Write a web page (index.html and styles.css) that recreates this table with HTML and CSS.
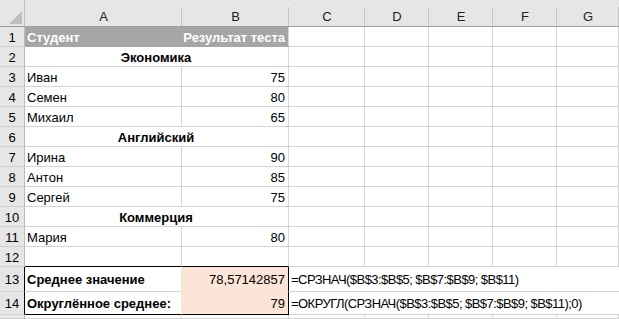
FILE: index.html
```html
<!DOCTYPE html>
<html>
<head>
  <meta charset="UTF-8">
  <title>Средний результат</title>
  <link rel="stylesheet" href="styles.css">
</head>
<body>
  <div class="sheet">
    <!-- заголовки столбцов -->
    <div class="corner">
      <svg width="24" height="26" viewBox="0 0 24 26"><polygon points="22,11 22,24 9,24" fill="#bdbdbd"/></svg>
    </div>
    <div class="col-head">A</div>
    <div class="col-head">B</div>
    <div class="col-head">C</div>
    <div class="col-head">D</div>
    <div class="col-head">E</div>
    <div class="col-head">F</div>
    <div class="col-head">G</div>

    <div class="row-head">1</div>
    <div class="cell head-fill first">Студент</div>
    <div class="cell head-fill num">Результат теста</div>
    <div class="cell"></div><div class="cell"></div><div class="cell"></div><div class="cell"></div><div class="cell"></div>

    <div class="row-head">2</div>
    <div class="cell title">Экономика</div>
    <div class="cell"></div><div class="cell"></div><div class="cell"></div><div class="cell"></div><div class="cell"></div>

    <div class="row-head">3</div>
    <div class="cell">Иван</div>
    <div class="cell num">75</div>
    <div class="cell"></div><div class="cell"></div><div class="cell"></div><div class="cell"></div><div class="cell"></div>

    <div class="row-head">4</div>
    <div class="cell">Семен</div>
    <div class="cell num">80</div>
    <div class="cell"></div><div class="cell"></div><div class="cell"></div><div class="cell"></div><div class="cell"></div>

    <div class="row-head">5</div>
    <div class="cell">Михаил</div>
    <div class="cell num">65</div>
    <div class="cell"></div><div class="cell"></div><div class="cell"></div><div class="cell"></div><div class="cell"></div>

    <div class="row-head">6</div>
    <div class="cell title">Английский</div>
    <div class="cell"></div><div class="cell"></div><div class="cell"></div><div class="cell"></div><div class="cell"></div>

    <div class="row-head">7</div>
    <div class="cell">Ирина</div>
    <div class="cell num">90</div>
    <div class="cell"></div><div class="cell"></div><div class="cell"></div><div class="cell"></div><div class="cell"></div>

    <div class="row-head">8</div>
    <div class="cell">Антон</div>
    <div class="cell num">85</div>
    <div class="cell"></div><div class="cell"></div><div class="cell"></div><div class="cell"></div><div class="cell"></div>

    <div class="row-head">9</div>
    <div class="cell">Сергей</div>
    <div class="cell num">75</div>
    <div class="cell"></div><div class="cell"></div><div class="cell"></div><div class="cell"></div><div class="cell"></div>

    <div class="row-head">10</div>
    <div class="cell title">Коммерция</div>
    <div class="cell"></div><div class="cell"></div><div class="cell"></div><div class="cell"></div><div class="cell"></div>

    <div class="row-head">11</div>
    <div class="cell">Мария</div>
    <div class="cell num">80</div>
    <div class="cell"></div><div class="cell"></div><div class="cell"></div><div class="cell"></div><div class="cell"></div>

    <div class="row-head">12</div>
    <div class="cell box-top"></div>
    <div class="cell box-top"></div>
    <div class="cell"></div><div class="cell"></div><div class="cell"></div><div class="cell"></div><div class="cell"></div>

    <!-- итоги в рамке -->
    <div class="row-head box-left">13</div>
    <div class="cell label">Среднее значение</div>
    <div class="cell num mark">78,57142857</div>
    <div class="cell formula">=СРЗНАЧ($B$3:$B$5; $B$7:$B$9; $B$11)</div>

    <div class="row-head box-left">14</div>
    <div class="cell label box-bottom">Округлённое среднее:</div>
    <div class="cell num mark box-bottom">79</div>
    <div class="cell formula">=ОКРУГЛ(СРЗНАЧ($B$3:$B$5; $B$7:$B$9; $B$11);0)</div>

    <!-- край следующей строки -->
    <div class="row-head"></div>
    <div class="cell"></div><div class="cell"></div><div class="cell"></div><div class="cell"></div><div class="cell"></div><div class="cell"></div><div class="cell"></div>
  </div>
</body>
</html>
```

FILE: styles.css
```css
html, body {
  margin: 0;
  padding: 0;
  background: #fff;
}
.sheet {
  width: 619px;
  height: 319px;
  overflow: hidden;
  display: grid;
  grid-template-columns: 25px 157px 107px 76px 64px 64px 64px 1fr;
  grid-template-rows: 27px repeat(12, 20px) 25px 23px 1fr;
  font-family: "Liberation Sans", Arial, sans-serif;
  font-size: 13px;
  color: #000;
}
.sheet > div {
  box-sizing: border-box;
  min-width: 0;
  white-space: nowrap;
}
.corner {
  background: #e6e6e6;
  border-right: 1px solid #bcbcbc;
  border-bottom: 1px solid #9e9e9e;
}
.corner svg {
  display: block;
}
.col-head {
  background: linear-gradient(#c4c4c4, #c4c4c4) right bottom / 1px 19px no-repeat, #e6e6e6;
  border-bottom: 1px solid #9e9e9e;
  display: flex;
  align-items: center;
  justify-content: center;
  padding-top: 7px;
  color: #222;
}
.row-head {
  background: #e6e6e6;
  border-right: 1px solid #bcbcbc;
  border-bottom: 1px solid #d0d0d0;
  display: flex;
  align-items: center;
  justify-content: center;
  padding-top: 1px;
}
.cell {
  border-right: 1px solid #d4d4d4;
  border-bottom: 1px solid #d4d4d4;
  display: flex;
  align-items: center;
  padding: 1px 3px 0 2px;
}
.num {
  justify-content: flex-end;
}
.head-fill {
  background: #a6a6a6;
  border-bottom-color: #a6a6a6;
  color: #fff;
  font-weight: bold;
}
.head-fill.first {
  border-right-color: #a6a6a6;
}
.title {
  grid-column: span 2;
  justify-content: center;
  font-weight: bold;
}
.box-top {
  border-bottom-color: #000;
}
.box-left {
  border-right-color: #000;
}
.box-bottom {
  border-bottom-color: #000;
}
.label {
  font-weight: bold;
  border-right-color: #fce4d6;
}
.mark {
  background: #fce4d6;
  border-right-color: #000;
  border-bottom-color: #fce4d6;
}
.mark.box-bottom {
  border-bottom-color: #000;
}
/* формула выходит за свою ячейку на соседние столбцы */
.formula {
  grid-column: span 5;
  border-right: none;
  letter-spacing: -0.55px;
}
```
